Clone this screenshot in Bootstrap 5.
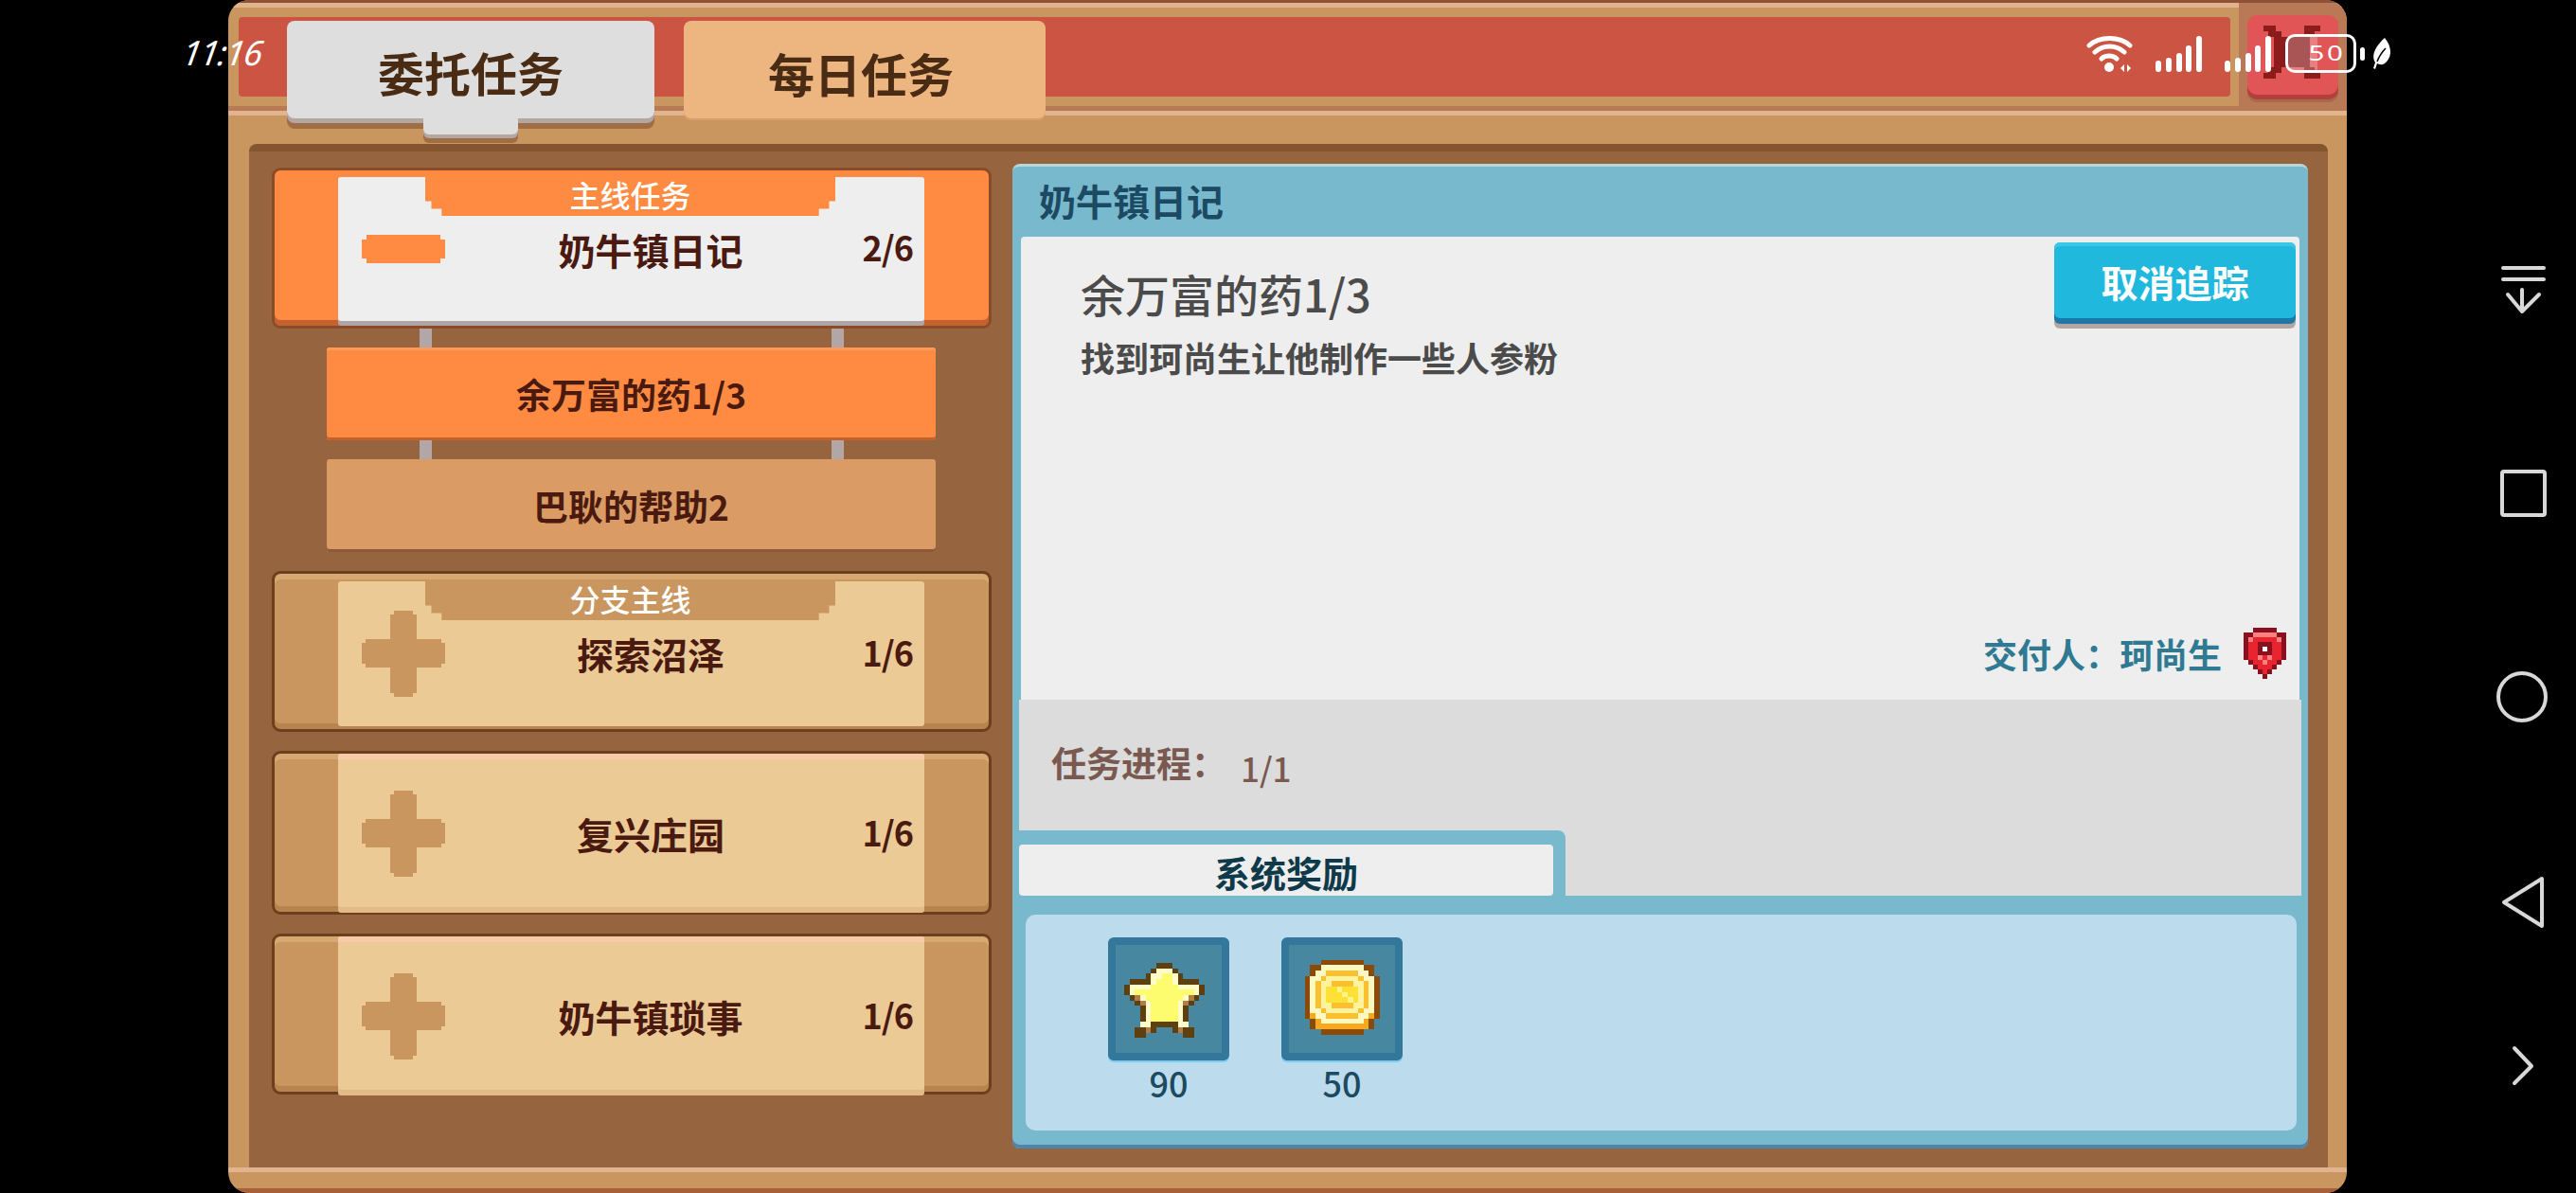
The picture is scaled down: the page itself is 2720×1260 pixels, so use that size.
<!DOCTYPE html>
<html lang="zh">
<head>
<meta charset="utf-8">
<title>任务</title>
<link href="https://cdn.jsdelivr.net/npm/bootstrap@5.3.0/dist/css/bootstrap.min.css" rel="stylesheet">
<style>
html,body{height:100%;}
body{background:#000;width:2720px;height:1260px;overflow:hidden;font-family:"Noto Sans CJK SC","Noto Sans",sans-serif;position:relative;}
.gframe{width:2237px;height:1260px;margin-left:241px;background:#c9965f;border-radius:22px;position:relative;overflow:hidden;}
.gnav{width:242px;height:1260px;}
.ghead{height:122px;border-top:3px solid #8f5236;box-shadow:inset 0 5px 0 #e2b48d,inset 0 -5px 0 #e2b48d,inset 0 -10px 0 #b87a55;}
.gbarbox{flex:1 1 auto;padding:15px 9px 0 11px;}
.gbar{height:84px;background:#cb5542;border-radius:4px;}
.gclosebox{width:114px;height:109px;background:#b97856;padding:13px 0 0 9px;}
.gclose{width:96px;height:84px;background:#e25556;border-radius:10px;box-shadow:0 5px 0 #b13f3c,0 8px 0 #a76a49;}
.gclose svg{display:block;}
.gtabs{position:absolute;top:22px;left:62px;gap:31px;z-index:2;}
.btn.gtab{height:103px;width:388px;border:0;border-radius:8px;font-size:49px;font-weight:700;line-height:1;color:#4a2c14;padding:3px 0 0;background:#dedede;position:relative;}
.btn.gtab:hover,.btn.gtab:active{background:#dedede;color:#4a2c14;}
.btn.gtab-on{box-shadow:0 5px 0 #b3a7a4,0 11px 0 #a06d45;}
.btn.gtab-on::after{content:"";position:absolute;left:144px;top:103px;width:100px;height:17px;background:#dedede;box-shadow:0 4px 0 #b3a7a4,0 9px 0 #a06d45;border-radius:0 0 6px 6px;}
.btn.gtab-off,.btn.gtab-off:hover{width:382px;background:#edb680;box-shadow:0 2px 0 #d79f6c;padding:5px 8px 0 0;}
.gpanel{margin:30px 20px 0 22px;height:1081px;background:#96643f;border-top:8px solid #855530;border-radius:8px 8px 0 0;padding:13px 21px 0 24px;gap:22px;}
.gfoot{height:27px;box-shadow:inset 0 5px 0 #e2b48d,inset 0 -5px 0 #a8603a;}
.gleft{width:760px;padding-top:4px;flex:none;}
.qcard{width:760px;height:170px;border:3px solid #6e3f1c;border-radius:9px;background:#c9965f;box-shadow:inset 0 6px 0 #d8a873,inset 0 -6px 0 #b78450;position:relative;}
.qcard-on{background:#ff8b42;border-color:#8a4c28;box-shadow:inset 0 -6px 0 #c4622f;}
.qtall{height:173px;}
.qgap{margin-top:20px;}
.qinner{width:619px;height:153px;margin:8px 0 0 67px;background:#ebca96;border-radius:3px;color:#4a1a10;position:relative;}
.qcard-on .qinner{background:#eeeeee;height:152px;margin-top:7px;box-shadow:0 5px 0 #afa5a5;}
.qplain{margin-top:0;height:162px;padding-top:7px;box-shadow:inset 0 6px 0 #f8caa9,0 6px 0 #e2bb88;}
.qicon{width:88px;margin-left:25px;flex:none;display:block;}
.qtitle{flex:1 1 auto;text-align:center;font-size:39px;font-weight:700;line-height:1;}
.qcount{width:60px;margin-right:12px;flex:none;text-align:right;font-size:36px;font-weight:700;line-height:1;margin-bottom:6px;white-space:nowrap;letter-spacing:-1px;}
.qlabel{position:absolute;top:0;left:92px;width:433px;height:41px;background:#c9965f;color:#fff;font-size:32px;font-weight:500;line-height:1;text-align:center;padding-top:2px;clip-path:polygon(0 0,100% 0,100% 62%,98.5% 62%,98.5% 82%,96% 82%,96% 100%,4% 100%,4% 82%,1.5% 82%,1.5% 62%,0 62%);}
.qcard-on .qlabel{background:#ff8b42;}
.qlink{height:20px;padding:0 156px;}
.qlink i{display:block;width:13px;background:#b2a6a6;}
.qsub{width:643px;height:98px;margin-left:58px;border-radius:3px;font-size:37px;font-weight:700;line-height:1;color:#4a1a10;background:#da9b64;box-shadow:inset 0 -3px 0 #8b5b37;}
.qsub-on{background:#ff8b42;box-shadow:inset 0 -3px 0 #c4622f,inset 0 3px 0 #ff9a58;}
.gright{width:1368px;height:1040px;background:#78b9cd;border-top:3px solid #b7d8d8;border-radius:8px;box-shadow:inset 0 -4px 0 #4f84ad;flex:none;position:relative;}
.rtitle{height:74px;padding:0 0 0 28px;font-size:39px;font-weight:700;line-height:71px;color:#1d4a63;}
.rwhite{height:489px;margin:0 9px;background:#eeeeee;border-radius:4px 4px 0 0;}
.rname{padding:36px 0 0 63px;color:#4b4b4b;}
.rh{font-size:47px;font-weight:500;line-height:1;margin:0;}
.rd{font-size:36px;font-weight:700;line-height:1;margin:26px 0 0;}
.btn.rcancel{width:255px;height:80px;margin:6px 4px 0 0;border:0;border-radius:6px;background:#21b8de;color:#fff;font-size:39px;font-weight:700;line-height:1;padding:2px 0 0;box-shadow:inset 0 4px 0 #3cc6e6,0 6px 0 #1c78a8,0 11px 0 #b3a7a4;}
.btn.rcancel:hover{background:#21b8de;color:#fff;}
.rgiver{margin-top:auto;padding:0 14px 22px 0;font-size:36px;font-weight:700;line-height:1;color:#2f7a92;gap:23px;}
.rgrey{height:207px;margin:0 7px;background:#dcdcdc;color:#7a5a50;}
.rprog{padding:48px 0 0 34px;font-size:37px;font-weight:700;line-height:1;}
.rprog span{font-size:35px;font-weight:500;margin-left:15px;position:relative;top:5px;}
.rtab{margin-top:auto;width:577px;height:69px;background:#78b9cd;border-radius:0 8px 0 0;padding:15px 13px 0 0;}
.rtabin{height:54px;background:#eeeeee;border-radius:4px;text-align:center;font-size:38px;font-weight:700;line-height:1;color:#0f3a4a;padding-top:10px;}
.rgift{height:228px;margin:20px 12px 0 14px;background:#bcdcee;border-radius:10px;padding:24px 0 0 87px;gap:55px;}
.rslot{width:128px;}
.rbox{height:130px;background:#47879f;border:8px solid #33779a;border-radius:6px;box-shadow:0 2px 0 #7fcdee;}
.rbox svg{display:block;}
.rnum{font-size:36px;font-weight:500;line-height:1;color:#1c4a60;text-align:center;margin-top:5px;}
.sbtime{position:absolute;left:193px;top:38px;color:#fff;font:italic 400 36px/1 "Noto Sans","Liberation Sans",sans-serif;letter-spacing:-1px;z-index:5;transform:skewX(-8deg);}
.sbicons{position:absolute;left:2203px;top:36px;z-index:5;}
.sbicons svg{display:block;}
.sbsig{margin-left:24px;}
.sbsig2{margin-left:24px;}
.sbbat{width:75px;height:41px;margin-left:15px;border:3px solid #fff;border-radius:10px;color:#fff;font:400 21px/35px "Noto Sans",sans-serif;text-align:center;background:linear-gradient(90deg,rgba(255,255,255,.25) 45%,rgba(255,255,255,0) 45%);padding-left:14px;}
.sbbat span{display:inline-block;transform:scaleX(1.4);letter-spacing:2px;}
.sbnub{width:5px;height:14px;background:#fff;border-radius:3px;margin-left:4px;}
.sbleaf{margin-left:8px;}
.gnavsvg{display:block;}
</style>
</head>
<body>
<div class="d-flex">
  <div class="gframe">
    <div class="ghead d-flex">
      <div class="gbarbox"><div class="gbar"></div></div>
      <div class="gclosebox">
        <div class="gclose">
          <svg width="96" height="84" viewBox="0 0 96 84" shape-rendering="crispEdges"><path fill="#8c1c1c" d="M17 11H30V17H36V23H60V11H77V17H71V23H66V55H71V61H77V67H60V55H36V61H30V67H17V61H22V55H28V23H22V17H17Z"/></svg>
        </div>
      </div>
    </div>
    <div class="gtabs d-flex">
      <button class="btn gtab gtab-on" type="button">委托任务</button>
      <button class="btn gtab gtab-off" type="button">每日任务</button>
    </div>
    <div class="gpanel d-flex">
      <div class="gleft">
        <div class="qcard qcard-on">
          <div class="qinner d-flex align-items-center">
            <span class="qlabel">主线任务</span>
            <svg class="qicon" height="30" viewBox="0 0 88 30" shape-rendering="crispEdges"><path fill="#ff8b42" d="M5 0h78v5h5v20h-5v5H5v-5H0V5h5z"/></svg>
            <div class="qtitle">奶牛镇日记</div>
            <div class="qcount">2/6</div>
          </div>
        </div>
        <div class="qlink d-flex justify-content-between"><i></i><i></i></div>
        <div class="qsub qsub-on d-flex align-items-center justify-content-center">余万富的药1/3</div>
        <div class="qlink d-flex justify-content-between"><i></i><i></i></div>
        <div class="qsub d-flex align-items-center justify-content-center">巴耿的帮助2</div>
        <div class="qcard qgap">
          <div class="qinner d-flex align-items-center">
            <span class="qlabel">分支主线</span>
            <svg class="qicon" height="91" viewBox="0 0 88 91" shape-rendering="crispEdges"><path fill="#c9965f" d="M34 0h20v4h4v26h26v4h4v22h-4v4H58v27h-4v4H34v-4h-4V60H4v-4H0V34h4v-4h26V4h4z"/></svg>
            <div class="qtitle">探索沼泽</div>
            <div class="qcount">1/6</div>
          </div>
        </div>
        <div class="qcard qtall qgap">
          <div class="qinner qplain d-flex align-items-center">
            <svg class="qicon" height="91" viewBox="0 0 88 91" shape-rendering="crispEdges"><path fill="#c9965f" d="M34 0h20v4h4v26h26v4h4v22h-4v4H58v27h-4v4H34v-4h-4V60H4v-4H0V34h4v-4h26V4h4z"/></svg>
            <div class="qtitle">复兴庄园</div>
            <div class="qcount">1/6</div>
          </div>
        </div>
        <div class="qcard qgap">
          <div class="qinner qplain d-flex align-items-center">
            <svg class="qicon" height="91" viewBox="0 0 88 91" shape-rendering="crispEdges"><path fill="#c9965f" d="M34 0h20v4h4v26h26v4h4v22h-4v4H58v27h-4v4H34v-4h-4V60H4v-4H0V34h4v-4h26V4h4z"/></svg>
            <div class="qtitle">奶牛镇琐事</div>
            <div class="qcount">1/6</div>
          </div>
        </div>
      </div>
      <div class="gright">
        <div class="rtitle">奶牛镇日记</div>
        <div class="rwhite d-flex flex-column">
          <div class="d-flex justify-content-between align-items-start">
            <div class="rname">
              <h2 class="rh">余万富的药1/3</h2>
              <p class="rd">找到珂尚生让他制作一些人参粉</p>
            </div>
            <button class="btn rcancel" type="button">取消追踪</button>
          </div>
          <div class="rgiver d-flex justify-content-end align-items-center">
            <span>交付人：珂尚生</span>
            <svg width="45" height="54" viewBox="0 0 9 11" shape-rendering="crispEdges">
              <path fill="#e8252f" d="M1 1h7v1h1v5H8v1H7v1H6v1H3V9H2V8H1V7H0V2h1z"/>
              <path fill="#8a0f1f" d="M2 0h5v1H2zM0 1h2v1H0zM7 1h2v1H7zM0 2h1v5H0zM8 2h1v5H8zM1 7h1v1H1zM7 7h1v1H7zM2 8h1v1H2zM6 8h1v1H6zM3 9h1v1H3zM5 9h1v1H5zM4 10h1v1H4zM3 3h3v3H3z"/>
              <path fill="#ff8080" d="M2 1h5v1H2zM1 2h1v1H1zM7 2h1v1H7zM3 6h1v1H3zM5 6h1v1H5zM4 7h1v1H4z"/>
              <path fill="#fff" d="M4 4h1v1H4z"/>
            </svg>
          </div>
        </div>
        <div class="rgrey d-flex flex-column">
          <div class="rprog">任务进程：<span>1/1</span></div>
          <div class="rtab"><div class="rtabin">系统奖励</div></div>
        </div>
        <div class="rgift d-flex">
          <div class="rslot">
            <div class="rbox">
              <svg width="112" height="114" viewBox="0 0 15 15" shape-rendering="crispEdges">
                <g transform="translate(1.2 2.4) scale(.76)">
                <path fill="#5e3f10" d="M6 0h3v1h1v1h1v1h3v1h1v2h-1v1h-1v1h-1v4h1v2h-2v-1H9v-1H6v1H4v1H2v-2h1V8H2V7H1V6H0V4h1V3h3V2h1V1h1z"/>
                <path fill="#fffbc8" d="M6 1h3v1h1v2h4v2h-1v1h-1v1h-1v3h1v1h-2v-1H5v1H3v-1h1V8H3V7H2V6H1V4h4V2h1z"/>
                <path fill="#fdfc6e" d="M7 2h2v2h1v1h3v1h-2v1h-1v4H5V7H4V6H2V5h3V4h1V3h1z"/>
                <path fill="#b07c48" d="M2 6h1v1H2zM12 6h1v1h-1zM3 7h1v1H3zM11 7h1v1h-1zM6 11h3v1h2v1h-1v-1H9v-1H6v1H5v1H4v-1h2z"/>
                </g>
              </svg>
            </div>
            <div class="rnum">90</div>
          </div>
          <div class="rslot">
            <div class="rbox">
              <svg width="112" height="114" viewBox="0 0 14 14" shape-rendering="crispEdges">
                <g transform="translate(2.1 1.85) scale(.705)">
                <path fill="#8c4a08" d="M3 0h8v1h2v2h1v8h-1v2h-2v1H3v-1H1v-2H0V3h1V1h2z"/>
                <path fill="#fff8c0" d="M3 1h8v1h1v1h1v7h-1v1h-1v1H3v-1H2v-1H1V3h1V2h1z"/>
                <path fill="#fbc02d" d="M4 2h6v1h1v1h1v5h-1v1h-1v1H4v-1H3V9H2V4h1V3h1z"/>
                <path fill="#fff3a0" d="M4 3h6v1h1v5h-1v1H4V9H3V4h1z"/>
                <path fill="#ffe135" d="M5 4h4v1h1v3H9v1H5V8H4V5h1z"/>
                <path fill="#fbc02d" d="M5 4h4v1H5zM5 8h4v1H5z"/>
                <path fill="#fff38a" d="M6 5h1v1h1v1h1v1H8V7H7V6H6z"/>
                <path fill="#f8a81a" d="M1 10h1v1h1v1h8v-1h1v-1h1v1h-1v2H2v-2H1z"/>
                </g>
              </svg>
            </div>
            <div class="rnum">50</div>
          </div>
        </div>
      </div>
    </div>
    <div class="gfoot"></div>
  </div>
  <div class="gnav">
    <svg class="gnavsvg" width="242" height="1260" viewBox="2478 0 242 1260" fill="none" stroke="#d8d8d8" stroke-width="4" stroke-linecap="round" stroke-linejoin="round">
      <path d="M2643 283h43M2643 295h43M2663 306v21M2648 311l15 18 18-18"/>
      <rect x="2642" y="498" width="45" height="46" rx="2"/>
      <circle cx="2663" cy="736" r="25"/>
      <path d="M2644 953l40-25v50z"/>
      <path d="M2655 1107l18 19-18 18"/>
    </svg>
  </div>
</div>
<div class="sbtime">11:16</div>
<div class="sbicons d-flex align-items-center">
  <svg width="49" height="40" viewBox="0 0 49 40" fill="none" stroke="#fff" stroke-width="5" stroke-linecap="round">
    <path d="M3 11C14 1 35 1 46 11M9 18C18 10 31 10 40 18M16 25C20 21 28 21 32 25"/>
    <circle cx="24" cy="34" r="5" fill="#fff" stroke="none"/>
    <path d="M36 35l4-4v8zM43 31l4 4-4 4z" fill="#fff" stroke="none"/>
  </svg>
  <svg class="sbsig" width="49" height="40" viewBox="0 0 49 40" fill="#fff"><rect x="0" y="27" width="6" height="12" rx="3"/><rect x="11" y="24" width="6" height="15" rx="3"/><rect x="22" y="19" width="6" height="20" rx="3"/><rect x="32" y="11" width="6" height="28" rx="3"/><rect x="43" y="1" width="6" height="38" rx="3"/></svg>
  <svg class="sbsig2" width="49" height="40" viewBox="0 0 49 40" fill="#fff"><rect x="0" y="27" width="6" height="12" rx="3"/><rect x="11" y="24" width="6" height="15" rx="3"/><rect x="22" y="19" width="6" height="20" rx="3"/><rect x="32" y="11" width="6" height="28" rx="3"/><rect x="43" y="1" width="6" height="38" rx="3"/></svg>
  <div class="sbbat"><span>50</span></div>
  <div class="sbnub"></div>
  <svg class="sbleaf" width="20" height="33" viewBox="0 0 20 33">
    <path fill="#fff" d="M13 0C20 8 22 20 13 27 10 29 7 28 5 27L3 33 1 32 3 26C-2 18 4 8 13 0z"/>
    <path fill="none" stroke="#000" stroke-width="1.6" d="M5 25C7 20 10 15 14 11"/>
  </svg>
</div>
<script src="https://cdn.jsdelivr.net/npm/bootstrap@5.3.0/dist/js/bootstrap.bundle.min.js"></script>
</body>
</html>
